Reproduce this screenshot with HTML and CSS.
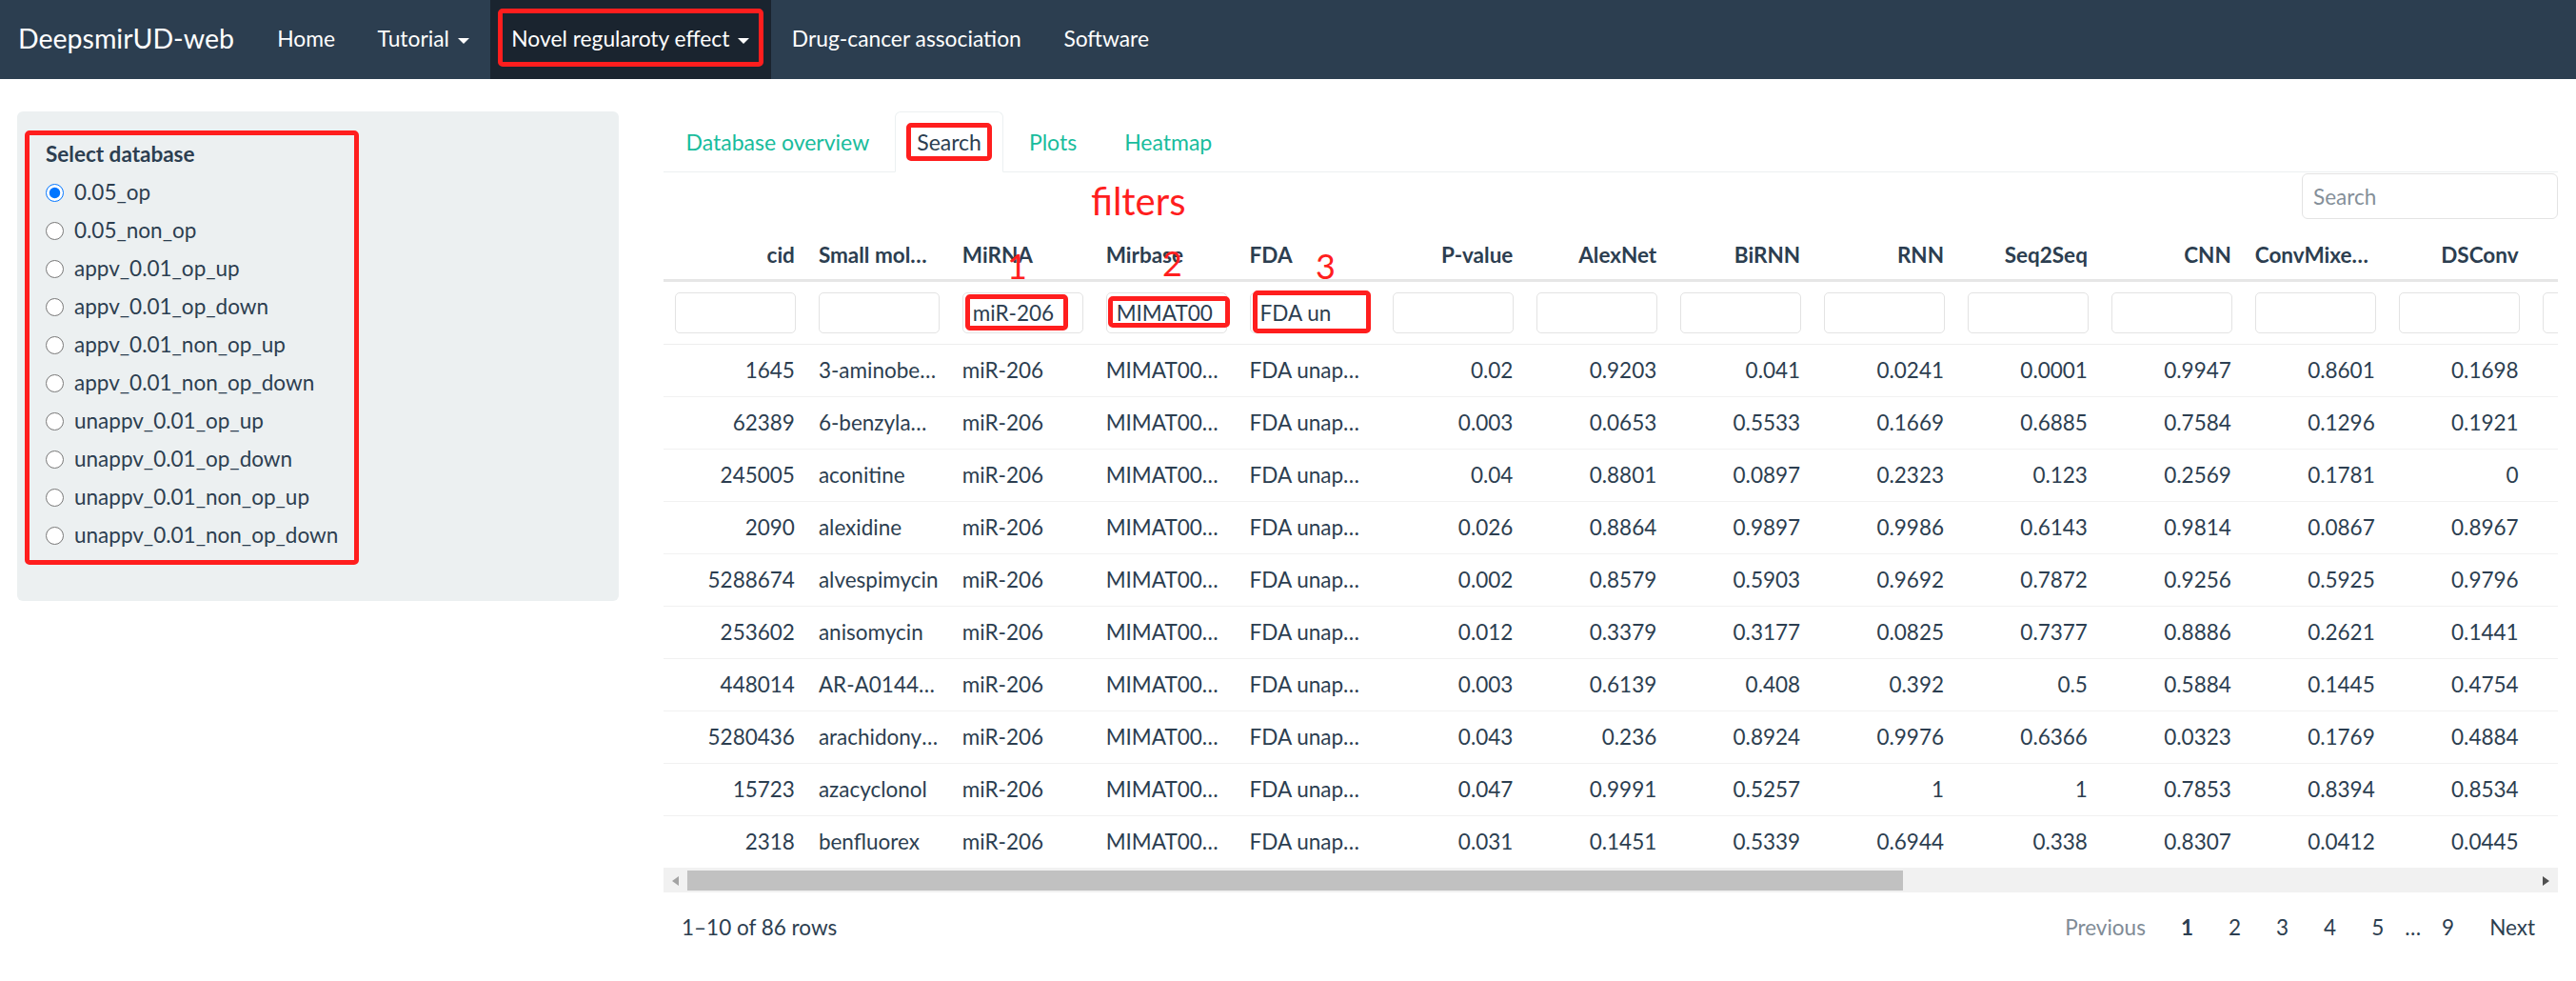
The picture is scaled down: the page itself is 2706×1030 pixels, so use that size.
FILE: index.html
```html
<!DOCTYPE html>
<html lang="en">
<head>
<meta charset="utf-8">
<title>DeepsmirUD-web</title>
<link rel="stylesheet" href="styles.css">
</head>
<body>
<nav class="navbar">
  <a class="brand">DeepsmirUD-web</a>
  <ul class="nav">
    <li><a>Home</a></li>
    <li><a>Tutorial <span class="caret"></span></a></li>
    <li class="active marked"><a>Novel regularoty effect <span class="caret"></span></a></li>
    <li><a>Drug-cancer association</a></li>
    <li><a>Software</a></li>
  </ul>
</nav>

<div class="page">
  <aside class="sidebar">
    <div class="well">
      <div class="anno-frame">
        <div class="control-label">Select database</div>
        <label class="radio"><input type="radio" name="db" checked><span>0.05_op</span></label>
        <label class="radio"><input type="radio" name="db"><span>0.05_non_op</span></label>
        <label class="radio"><input type="radio" name="db"><span>appv_0.01_op_up</span></label>
        <label class="radio"><input type="radio" name="db"><span>appv_0.01_op_down</span></label>
        <label class="radio"><input type="radio" name="db"><span>appv_0.01_non_op_up</span></label>
        <label class="radio"><input type="radio" name="db"><span>appv_0.01_non_op_down</span></label>
        <label class="radio"><input type="radio" name="db"><span>unappv_0.01_op_up</span></label>
        <label class="radio"><input type="radio" name="db"><span>unappv_0.01_op_down</span></label>
        <label class="radio"><input type="radio" name="db"><span>unappv_0.01_non_op_up</span></label>
        <label class="radio"><input type="radio" name="db"><span>unappv_0.01_non_op_down</span></label>
      </div>
    </div>
  </aside>

  <main class="main">
    <ul class="tabs">
      <li><a>Database overview</a></li>
      <li class="active marked"><a>Search</a></li>
      <li><a>Plots</a></li>
      <li><a>Heatmap</a></li>
    </ul>

    <div class="tab-content">
      <div class="search-bar"><input class="search" type="text" placeholder="Search"></div>

      <div class="table-wrap">
        <div class="tr th-row">
          <div class="num">cid</div>
          <div>Small molecule</div>
          <div>MiRNA</div>
          <div>Mirbase</div>
          <div>FDA</div>
          <div class="num">P-value</div>
          <div class="num">AlexNet</div>
          <div class="num">BiRNN</div>
          <div class="num">RNN</div>
          <div class="num">Seq2Seq</div>
          <div class="num">CNN</div>
          <div class="num">ConvMixer64</div>
          <div class="num">DSConv</div>
          <div class="num"></div>
        </div>
        <div class="tr filter-row">
          <div><input class="filter" type="text"></div>
          <div><input class="filter" type="text"></div>
          <div><input class="filter" type="text" value="miR-206"><span class="anno-box box-1"></span></div>
          <div><input class="filter" type="text" value="MIMAT00"><span class="anno-box box-2"></span></div>
          <div><input class="filter" type="text" value="FDA un"><span class="anno-box box-3"></span></div>
          <div><input class="filter" type="text"></div>
          <div><input class="filter" type="text"></div>
          <div><input class="filter" type="text"></div>
          <div><input class="filter" type="text"></div>
          <div><input class="filter" type="text"></div>
          <div><input class="filter" type="text"></div>
          <div><input class="filter" type="text"></div>
          <div><input class="filter" type="text"></div>
          <div><input class="filter" type="text"></div>
        </div>

        <div class="tr body-row">
          <div class="num">1645</div><div>3-aminobenzamide</div><div>miR-206</div><div>MIMAT0000462</div><div>FDA unapproved</div>
          <div class="num">0.02</div><div class="num">0.9203</div><div class="num">0.041</div><div class="num">0.0241</div><div class="num">0.0001</div><div class="num">0.9947</div><div class="num">0.8601</div><div class="num">0.1698</div><div class="num"></div>
        </div>
        <div class="tr body-row">
          <div class="num">62389</div><div>6-benzylaminopurine</div><div>miR-206</div><div>MIMAT0000462</div><div>FDA unapproved</div>
          <div class="num">0.003</div><div class="num">0.0653</div><div class="num">0.5533</div><div class="num">0.1669</div><div class="num">0.6885</div><div class="num">0.7584</div><div class="num">0.1296</div><div class="num">0.1921</div><div class="num"></div>
        </div>
        <div class="tr body-row">
          <div class="num">245005</div><div>aconitine</div><div>miR-206</div><div>MIMAT0000462</div><div>FDA unapproved</div>
          <div class="num">0.04</div><div class="num">0.8801</div><div class="num">0.0897</div><div class="num">0.2323</div><div class="num">0.123</div><div class="num">0.2569</div><div class="num">0.1781</div><div class="num">0</div><div class="num"></div>
        </div>
        <div class="tr body-row">
          <div class="num">2090</div><div>alexidine</div><div>miR-206</div><div>MIMAT0000462</div><div>FDA unapproved</div>
          <div class="num">0.026</div><div class="num">0.8864</div><div class="num">0.9897</div><div class="num">0.9986</div><div class="num">0.6143</div><div class="num">0.9814</div><div class="num">0.0867</div><div class="num">0.8967</div><div class="num"></div>
        </div>
        <div class="tr body-row">
          <div class="num">5288674</div><div>alvespimycin</div><div>miR-206</div><div>MIMAT0000462</div><div>FDA unapproved</div>
          <div class="num">0.002</div><div class="num">0.8579</div><div class="num">0.5903</div><div class="num">0.9692</div><div class="num">0.7872</div><div class="num">0.9256</div><div class="num">0.5925</div><div class="num">0.9796</div><div class="num"></div>
        </div>
        <div class="tr body-row">
          <div class="num">253602</div><div>anisomycin</div><div>miR-206</div><div>MIMAT0000462</div><div>FDA unapproved</div>
          <div class="num">0.012</div><div class="num">0.3379</div><div class="num">0.3177</div><div class="num">0.0825</div><div class="num">0.7377</div><div class="num">0.8886</div><div class="num">0.2621</div><div class="num">0.1441</div><div class="num"></div>
        </div>
        <div class="tr body-row">
          <div class="num">448014</div><div>AR-A014418</div><div>miR-206</div><div>MIMAT0000462</div><div>FDA unapproved</div>
          <div class="num">0.003</div><div class="num">0.6139</div><div class="num">0.408</div><div class="num">0.392</div><div class="num">0.5</div><div class="num">0.5884</div><div class="num">0.1445</div><div class="num">0.4754</div><div class="num"></div>
        </div>
        <div class="tr body-row">
          <div class="num">5280436</div><div>arachidonyltrifluoromethane</div><div>miR-206</div><div>MIMAT0000462</div><div>FDA unapproved</div>
          <div class="num">0.043</div><div class="num">0.236</div><div class="num">0.8924</div><div class="num">0.9976</div><div class="num">0.6366</div><div class="num">0.0323</div><div class="num">0.1769</div><div class="num">0.4884</div><div class="num"></div>
        </div>
        <div class="tr body-row">
          <div class="num">15723</div><div>azacyclonol</div><div>miR-206</div><div>MIMAT0000462</div><div>FDA unapproved</div>
          <div class="num">0.047</div><div class="num">0.9991</div><div class="num">0.5257</div><div class="num">1</div><div class="num">1</div><div class="num">0.7853</div><div class="num">0.8394</div><div class="num">0.8534</div><div class="num"></div>
        </div>
        <div class="tr body-row">
          <div class="num">2318</div><div>benfluorex</div><div>miR-206</div><div>MIMAT0000462</div><div>FDA unapproved</div>
          <div class="num">0.031</div><div class="num">0.1451</div><div class="num">0.5339</div><div class="num">0.6944</div><div class="num">0.338</div><div class="num">0.8307</div><div class="num">0.0412</div><div class="num">0.0445</div><div class="num"></div>
        </div>
      </div>

      <div class="hscroll">
        <span class="sb-btn sb-left"></span>
        <span class="sb-thumb"></span>
        <span class="sb-space"></span>
        <span class="sb-btn sb-right"></span>
      </div>

      <div class="footer">
        <div class="page-info">1–10 of 86 rows</div>
        <div class="pages">
          <span class="page-btn disabled">Previous</span>
          <span class="page-btn current">1</span>
          <span class="page-btn">2</span>
          <span class="page-btn">3</span>
          <span class="page-btn">4</span>
          <span class="page-btn">5</span>
          <span class="page-ellipsis">…</span>
          <span class="page-btn">9</span>
          <span class="page-btn">Next</span>
        </div>
      </div>
    </div>

    <div class="anno-text anno-filters">filters</div>
    <div class="anno-text anno-num anno-1">1</div>
    <div class="anno-text anno-num anno-2">2</div>
    <div class="anno-text anno-num anno-3">3</div>
  </main>
</div>
</body>
</html>
```

FILE: styles.css
```css
* { box-sizing: border-box; }

html, body {
  margin: 0;
  padding: 0;
}

body {
  font-family: Lato, "Open Sans", sans-serif;
  font-size: 22.5px;
  line-height: 32px;
  color: #2c3e50;
  background: #ffffff;
}

/* ---------- navbar ---------- */
.navbar {
  display: flex;
  height: 83px;
  background: #2c3e50;
  padding-left: 19px;
}

.brand {
  color: #ffffff;
  font-size: 28.5px;
  line-height: 81px;
  padding-right: 23px;
}

.nav {
  display: flex;
  list-style: none;
  margin: 0;
  padding: 0;
  font-size: 22.8px;
}

.nav li {
  position: relative;
}

.nav a {
  display: block;
  color: #ffffff;
  padding: 0 22.3px;
  line-height: 81px;
}

.nav li.active {
  background: #1a242f;
}

.caret {
  display: inline-block;
  width: 0;
  height: 0;
  margin-left: 3px;
  vertical-align: middle;
  border-top: 6px solid #ffffff;
  border-left: 6px solid transparent;
  border-right: 6px solid transparent;
}

.nav li.marked::after {
  content: "";
  position: absolute;
  left: 8px;
  right: 8px;
  top: 9px;
  bottom: 13px;
  border: 5px solid #ff1e1e;
  border-radius: 5px;
}

/* ---------- page layout ---------- */
.page {
  display: flex;
  align-items: flex-start;
  gap: 47px;
  padding: 34px 19px 0 18px;
}

.sidebar {
  flex: none;
  width: 632px;
}

.well {
  background: #ecf0f1;
  border-radius: 6px;
  padding: 20px 8px 38px;
}

.anno-frame {
  width: 351px;
  border: 5px solid #ff1e1e;
  border-radius: 5px;
  padding: 4px 0 6px 17px;
}

.control-label {
  font-weight: 700;
  margin-bottom: 4px;
}

.radio {
  display: flex;
  align-items: center;
  height: 40px;
}

.radio input {
  width: 19px;
  height: 19px;
  margin: 0 11px 0 0;
}

.main {
  flex: 1;
  min-width: 0;
  position: relative;
}

/* ---------- tabs ---------- */
.tabs {
  display: flex;
  list-style: none;
  margin: 0;
  padding: 0;
  border-bottom: 1px solid #ecf0f1;
  font-size: 23px;
}

.tabs li {
  position: relative;
  margin-right: 3px;
  margin-bottom: -1px;
}

.tabs a {
  display: block;
  padding: 15px 22.5px;
  line-height: 32px;
  color: #18bc9c;
  border: 1px solid transparent;
  border-radius: 6px 6px 0 0;
}

.tabs li.active a {
  color: #2c3e50;
  background: #ffffff;
  border-color: #ecf0f1;
  border-bottom-color: #ffffff;
}

.tabs li.marked::after {
  content: "";
  position: absolute;
  left: 12px;
  right: 12px;
  top: 12px;
  bottom: 12px;
  border: 5px solid #ff1e1e;
  border-radius: 5px;
}

/* ---------- search ---------- */
.search-bar {
  display: flex;
  justify-content: flex-end;
  padding-top: 1px;
  margin-bottom: 10px;
}

.search {
  width: 269px;
  height: 48px;
  border: 1px solid #e3e3e3;
  border-radius: 6px;
  padding: 0 11px;
  font: inherit;
  color: #2c3e50;
  outline: none;
}

.search::placeholder {
  color: #858f99;
}

/* ---------- table ---------- */
.table-wrap {
  overflow: hidden;
}

.tr {
  display: flex;
}

.tr > div {
  flex: none;
  width: 150.9px;
  padding: 0 13px 0 12px;
  white-space: nowrap;
  overflow: hidden;
  text-overflow: ellipsis;
}

.tr > .num {
  text-align: right;
}

.th-row {
  height: 56px;
  align-items: center;
  padding-top: 2px;
  border-bottom: 3px solid #e6e6e6;
  font-weight: 700;
}

.th-row > div:nth-child(2) {
  padding-right: 23px;
}

.filter-row {
  height: 66px;
  border-bottom: 1px solid #eeeeee;
}

.tr.filter-row > div {
  position: relative;
  display: flex;
  align-items: center;
  overflow: visible;
  padding: 0 12px;
}

.filter {
  width: 100%;
  height: 43px;
  border: 1px solid #e3e3e3;
  border-radius: 5px;
  padding: 0 10px;
  font: inherit;
  color: #2c3e50;
  background: #ffffff;
  outline: none;
}

.body-row {
  height: 55px;
  align-items: center;
  border-bottom: 1px solid #f1f1f1;
}

/* ---------- annotations ---------- */
.anno-box {
  position: absolute;
  border: 5px solid #ff1e1e;
  border-radius: 5px;
}

.box-1 { left: 15px; top: 13px; width: 108px; height: 38px; }
.box-2 { left: 14px; top: 15px; width: 128px; height: 33px; }
.box-3 { left: 15px; top: 9px; width: 124px; height: 45px; }

.anno-text {
  position: absolute;
  color: #ff1e1e;
  font-family: Lato, sans-serif;
}

.anno-filters {
  left: 449px;
  top: 74px;
  font-size: 40px;
  line-height: 40px;
}

.anno-num {
  font-size: 36px;
  line-height: 36px;
}

.anno-1 { left: 361px; top: 144px; }
.anno-2 { left: 524px; top: 141px; }
.anno-3 { left: 685px; top: 144px; }

/* ---------- scrollbar ---------- */
.hscroll {
  display: flex;
  align-items: center;
  height: 25px;
  background: #f1f1f1;
}

.sb-btn {
  flex: none;
  display: flex;
  align-items: center;
  justify-content: center;
  width: 25px;
  height: 25px;
}

.sb-left::before {
  content: "";
  border-right: 7px solid #a3a3a3;
  border-top: 5px solid transparent;
  border-bottom: 5px solid transparent;
}

.sb-right::before {
  content: "";
  border-left: 7px solid #505050;
  border-top: 5px solid transparent;
  border-bottom: 5px solid transparent;
}

.sb-thumb {
  flex: none;
  width: 1277px;
  height: 21px;
  background: #c1c1c1;
}

.sb-space {
  flex: 1;
}

/* ---------- footer / pagination ---------- */
.footer {
  display: flex;
  justify-content: space-between;
  align-items: center;
  height: 73px;
  padding: 0 12px 0 19px;
}

.pages {
  display: flex;
  align-items: center;
  gap: 13px;
}

.page-btn {
  padding: 0 12px;
}

.page-btn.disabled {
  color: #808b96;
}

.page-btn.current {
  font-weight: 700;
}

.page-ellipsis {
  margin: 0 -3px;
}
```
